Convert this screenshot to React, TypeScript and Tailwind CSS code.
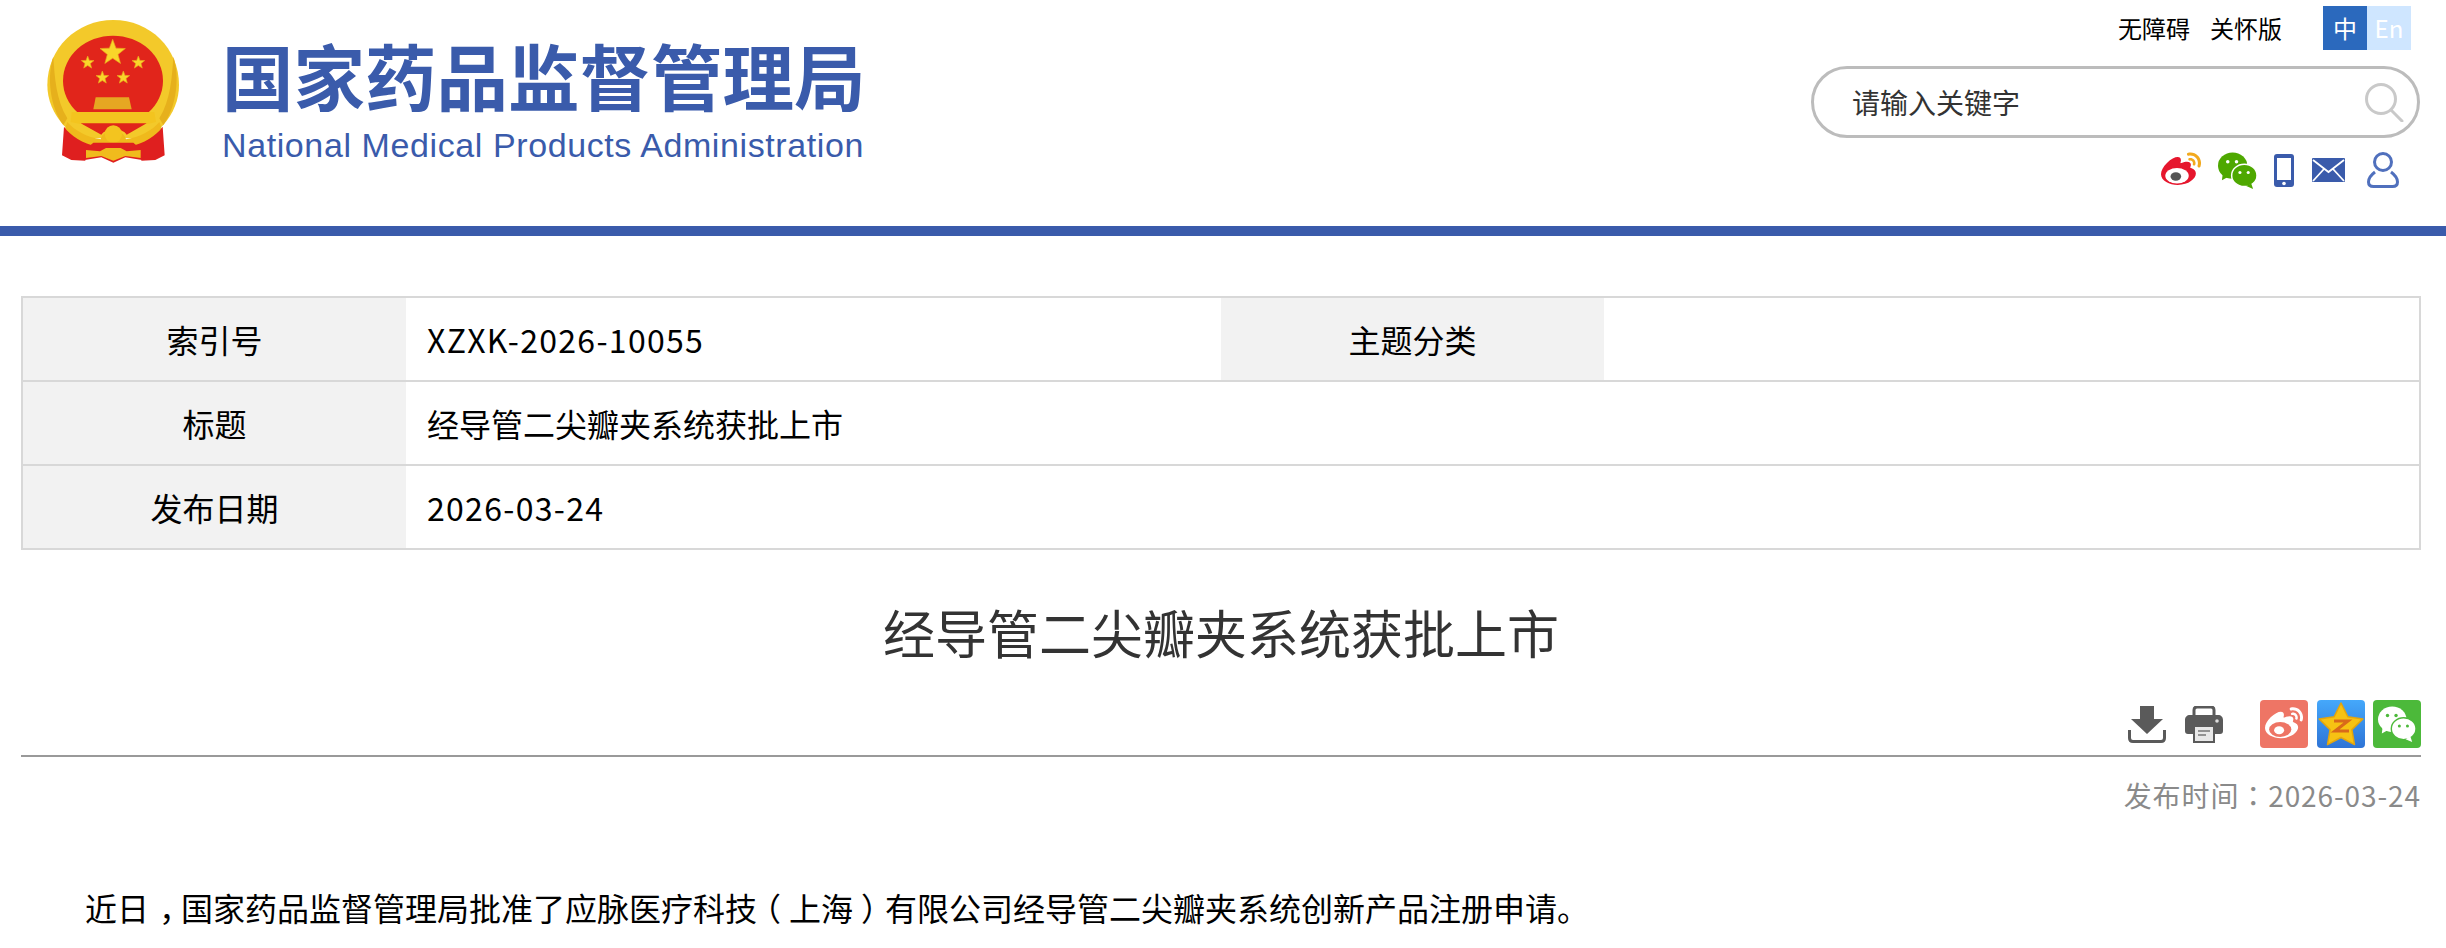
import React from "react";

const BLUE = "#3a5bab";

// pontos de uma estrela de 5 pontas
const starPoints = (cx: number, cy: number, r: number, inner = 0.42) => {
  const pts: string[] = [];
  for (let i = 0; i < 10; i++) {
    const rad = i % 2 === 0 ? r : r * inner;
    const a = (Math.PI / 5) * i - Math.PI / 2;
    pts.push(`${(cx + rad * Math.cos(a)).toFixed(1)},${(cy + rad * Math.sin(a)).toFixed(1)}`);
  }
  return pts.join(" ");
};

const Emblem = () => (
  <svg width="170" height="160" viewBox="0 0 510 480" className="shrink-0">
    <path d="M250 30C140 30 52 115 52 225c0 45 18 85 48 120l40 40h220l40-40c30-35 47-75 47-120C447 115 360 30 250 30z" fill="#f3c92a" />
    <path d="M70 140C50 200 60 290 100 345l12-20C78 270 74 200 70 140zM430 140c20 60 10 150-30 205l-12-20c34-55 38-125 42-185z" fill="#e6b01c" />
    <ellipse cx="249" cy="212" rx="150" ry="135" fill="#e1251b" />
    <polygon points={starPoints(248, 128, 40)} fill="#f9d62a" stroke="#e8a81c" strokeWidth="2" />
    <polygon points={starPoints(173, 158, 20)} fill="#f9d62a" stroke="#e8a81c" strokeWidth="2" />
    <polygon points={starPoints(325, 158, 20)} fill="#f9d62a" stroke="#e8a81c" strokeWidth="2" />
    <polygon points={starPoints(217, 203, 20)} fill="#f9d62a" stroke="#e8a81c" strokeWidth="2" />
    <polygon points={starPoints(280, 203, 20)} fill="#f9d62a" stroke="#e8a81c" strokeWidth="2" />
    <path d="M197 262h100l8 36H190z" fill="#e6a722" />
    <path d="M125 306h248l5 30-25 6H150l-28-6z" fill="#f3c41f" />
    <path d="M152 340h198l-60 34c-12-22-62-22-76 0z" fill="#e1251b" />
    <path d="M112 336c20 25 60 46 100 52 8-34 68-34 76 0 40-6 80-27 100-52l10 28c-24 30-64 46-108 52H210c-44-6-84-22-108-52z" fill="#efb91c" />
    <circle cx="250" cy="372" r="26" fill="#f3c41f" />
    <path d="M102 350c20 28 56 50 100 60l-36 14v28l-42-2-28-14z" fill="#df1f1f" />
    <path d="M398 350c-20 28-56 50-100 60l36 14v28l42-2 28-14z" fill="#df1f1f" />
    <path d="M190 398h120l26 22v30l-50-8-36 16-36-16-50 8v-30z" fill="#df1f1f" />
    <path d="M168 420l42 4 18-10h44l18 10 42-4v24l-46-6-36 14-36-14-46 6z" fill="#f0bb1d" />
  </svg>
);

type WeiboProps = { size: number; body: string; inner: string; pupil: string; arcs: string };

const WeiboGlyph = ({ size, body, inner, pupil, arcs }: WeiboProps) => (
  <svg width={size} height={size} viewBox="0 0 512 512">
    <path fill={body} d="M214.8 446.7C108.5 446.7 0 395.3 0 310.4c0-44.3 28-95.4 76.3-143.7C176 67 279.5 65.8 249.9 161c-4 13.1 12.3 5.700 12.3 6 79.5-33.6 140.5-16.8 114 51.4-3.7 9.4 1.1 10.9 8.3 13.1 135.7 42.3 34.8 215.2-169.7 215.2z" />
    <ellipse cx="205" cy="330" rx="150" ry="100" fill={inner} />
    <ellipse cx="190" cy="340" rx="68" ry="54" fill={pupil} />
    <path fill={arcs} d="M407 177.6c7.6-24-13.4-46.8-37.4-41.7-22 4.8-28.8-28.1-7.1-32.8 50.1-10.9 92.3 37.1 76.5 84.8-6.8 21.2-38.8 10.8-32-10.3zM347.9 35.1c-25.9 5.6-16.8 43.7 8.3 38.3 72.3-15.2 134.8 52.8 111.7 124-7.4 24.2 29.1 37 37.4 12.2C537.6 112.6 454.1 12.4 347.9 35.1z" />
  </svg>
);

const WechatGlyph = ({ size, fill, gap }: { size: number; fill: string; gap: string }) => (
  <svg width={size} height={size} viewBox="0 0 40 40">
    <ellipse cx="15" cy="15" rx="15" ry="13.5" fill={fill} />
    <path d="M5 22l-1 8 9-5z" fill={fill} />
    <ellipse cx="27" cy="25" rx="13" ry="11.5" fill={fill} stroke={gap} strokeWidth="1.5" />
    <path d="M34 33l2 6-7-3z" fill={fill} />
    <circle cx="10" cy="11" r="1.8" fill={gap} />
    <circle cx="19" cy="11" r="1.8" fill={gap} />
    <circle cx="22.5" cy="22" r="1.6" fill={gap} />
    <circle cx="31" cy="22" r="1.6" fill={gap} />
  </svg>
);

// pontuação centrada na caixa, como na referência
const Punct = ({ children }: { children: string }) => (
  <span className="font-['Noto_Sans_CJK_TC',sans-serif]">{children}</span>
);

const HeaderRight = () => (
  <div className="mr-[26px] flex w-[609px] flex-col items-end pt-[6px]">
    <div className="mr-[9px] flex h-[44px] items-center text-[24px] text-black">
      <a>无障碍</a>
      <a className="ml-[20px]">关怀版</a>
      <div className="ml-[41px] flex h-full text-white">
        <span className="flex w-[44px] items-center justify-center bg-[#2b69bd]">中</span>
        <span className="flex w-[44px] items-center justify-center bg-[#cfe6ff]">En</span>
      </div>
    </div>
    <div className="mt-[16px] flex h-[72px] w-full items-center justify-between rounded-full border-[3px] border-[#bcbcbc] pl-[38px] pr-[13px]">
      <span className="text-[28px] text-[#333]">请输入关键字</span>
      <svg width="40" height="40" viewBox="0 0 40 40" fill="none" stroke="#c9c9c9" strokeWidth="3">
        <circle cx="17" cy="17" r="14.5" />
        <path d="M27 28l11 11" strokeLinecap="round" />
      </svg>
    </div>
    <div className="mr-[21px] mt-[14px] flex h-[36px] items-center gap-[17px]">
      <WeiboGlyph size={40} body="#e6162d" inner="#fff" pupil="#555" arcs="#f2a91e" />
      <WechatGlyph size={39} fill="#4ea800" gap="#fff" />
      <svg width="20" height="33" viewBox="0 0 20 33">
        <rect width="20" height="33" rx="3" fill={BLUE} />
        <rect x="3" y="4" width="14" height="22" fill="#fff" />
        <circle cx="10" cy="29.5" r="1.8" fill="#fff" />
      </svg>
      <svg width="33" height="24" viewBox="0 0 33 24" className="ml-[1px]">
        <rect width="33" height="24" rx="1" fill={BLUE} />
        <path d="M1 2l15.500 12L32 2M1 23l11-12M32 23L21 11" fill="none" stroke="#fff" strokeWidth="1.800" />
      </svg>
      <svg width="32" height="36" viewBox="0 0 32 36" fill="none" stroke="#5070bd" strokeWidth="3" className="ml-[5px]">
        <circle cx="16" cy="10" r="8.500" />
        <path d="M8 20C4 23 1.500 26 1.500 30c0 3 2 4.500 5 4.500h19c3 0 5-1.500 5-4.500 0-4-2.500-7-6.500-10" />
      </svg>
    </div>
  </div>
);

const Cell = ({ label, children, className = "" }: { label: string; children?: React.ReactNode; className?: string }) => (
  <>
    <div className="flex w-[383px] shrink-0 items-center justify-center bg-[#f2f2f2]">{label}</div>
    <div className={`flex items-center pl-[21px] ${className}`}>{children}</div>
  </>
);

const rowClass = "flex h-[84px] border-b-2 border-[#d8d8d8] last:h-[82px] last:border-b-0";

const InfoTable = () => (
  <div className="border-2 border-[#d8d8d8] text-[32px] text-black">
    <div className={rowClass}>
      <Cell label="索引号" className="w-[815px] tracking-[1.3px]">XZXK-2026-10055</Cell>
      <Cell label="主题分类" className="flex-1" />
    </div>
    <div className={rowClass}>
      <Cell label="标题" className="flex-1">经导管二尖瓣夹系统获批上市</Cell>
    </div>
    <div className={rowClass}>
      <Cell label="发布日期" className="flex-1 tracking-[1.3px]">2026-03-24</Cell>
    </div>
  </div>
);

const Actions = () => (
  <div className="flex h-[48px] items-center justify-end">
    <svg width="38" height="37" viewBox="0 0 38 37" fill="#5a5a5a">
      <path d="M12 0h14v13h9L19 28 3 13h9z" />
      <path d="M1.500 24v8c0 2 1 3.500 3.500 3.500h28c2.500 0 3.500-1.500 3.500-3.500v-8" fill="none" stroke="#5a5a5a" strokeWidth="3" />
    </svg>
    <svg width="38" height="37" viewBox="0 0 38 37" className="ml-[19px]">
      <path d="M9 9V4c0-2 1-3 3-3h14c2 0 3 1 3 3v5" fill="none" stroke="#5a5a5a" strokeWidth="3" />
      <path d="M5 9h28c3 0 5 2 5 5v11c0 2-1 3-3 3h-5v9H8v-9H3c-2 0-3-1-3-3V14c0-3 2-5 5-5z" fill="#5a5a5a" />
      <rect x="10" y="21" width="18" height="14" fill="#e8e8e8" />
      <path d="M13 25h12M13 29h8" stroke="#777" strokeWidth="1.500" />
      <circle cx="32" cy="15" r="1.800" fill="#ddd" />
    </svg>
    <div className="ml-[37px] flex h-[48px] w-[48px] items-center justify-center rounded-[4px] bg-[#ee7565]">
      <WeiboGlyph size={38} body="#fff" inner="#ee7565" pupil="#fff" arcs="#fff" />
    </div>
    <div className="ml-[9px] h-[48px] w-[48px] overflow-hidden rounded-[4px] bg-gradient-to-b from-[#45a8fb] to-[#2f74d6]">
      <svg width="48" height="48" viewBox="0 0 48 48">
        <polygon points={starPoints(24, 26, 23, 0.5)} fill="#f7c213" stroke="#e3a50f" strokeWidth="1.500" strokeLinejoin="round" />
        <path d="M17 21h14l-13 10h14" fill="none" stroke="#d9691a" strokeWidth="3" />
      </svg>
    </div>
    <div className="ml-[8px] flex h-[48px] w-[48px] items-center justify-center rounded-[4px] bg-[#4cb93a]">
      <WechatGlyph size={38} fill="#fff" gap="#4cb93a" />
    </div>
  </div>
);

export default function App() {
  return (
    <div className="min-h-[948px] bg-white font-['Noto_Sans_CJK_SC',sans-serif]">
      <header className="flex h-[226px] justify-between">
        <div className="flex pl-[30px] pt-[10px]">
          <Emblem />
          <div className="ml-[22px] pt-[28px]" style={{ color: BLUE }}>
            <div className="whitespace-nowrap text-[71.500px] font-bold leading-[72px]">国家药品监督管理局</div>
            <div className="mt-[17px] whitespace-nowrap font-['Liberation_Sans',sans-serif] text-[34px] leading-[36px] tracking-[0.6px]">
              National Medical Products Administration
            </div>
          </div>
        </div>
        <HeaderRight />
      </header>
      <div className="h-[10px] bg-[#3a5bab]" />

      <main className="pl-[21px] pr-[25px] pt-[60px]">
        <InfoTable />
        <h1 className="mt-[46px] text-center text-[52px] font-normal leading-[72px] text-[#333]">
          经导管二尖瓣夹系统获批上市
        </h1>
        <div className="mt-[32px] border-b-2 border-[#999] pb-[7px]">
          <Actions />
        </div>
        <p className="mt-[19px] text-right text-[28px] leading-[38px] tracking-[0.9px] text-[#8a8a8a]">
          发布时间<Punct>：</Punct>2026-03-24
        </p>
        <p className="mt-[69px] pl-[64px] text-[32px] leading-[48px] text-black">
          近日<span className="pl-[10px] tracking-[-10px] font-['Noto_Sans_CJK_KR',sans-serif]">，</span>国家药品监督管理局批准了应脉医疗科<span className="tracking-[-8px]">技</span><span className="tracking-[8px]">（</span>上海<span className="pl-[8px] tracking-[-8px]">）</span>有限公司经导管二尖瓣夹系统创新产品注册申请。
        </p>
      </main>
    </div>
  );
}
